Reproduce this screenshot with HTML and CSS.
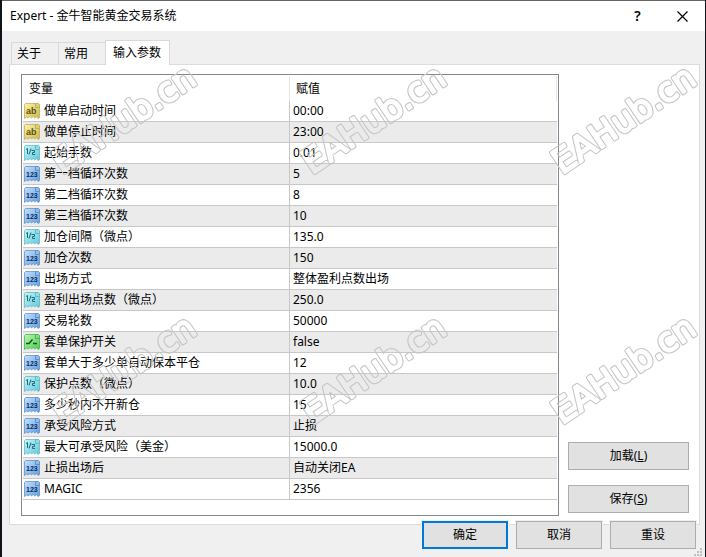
FILE: index.html
```html
<!DOCTYPE html>
<html lang="zh-CN">
<head>
    <meta charset="UTF-8">
    <meta name="viewport" content="width=device-width, initial-scale=1.0">
    <title>Expert - 金牛智能黄金交易系统</title>
    <link rel="stylesheet" href="styles.css">
</head>
<body>
    <!-- Shared drawings -->
    <svg class="defs" width="0" height="0" aria-hidden="true">
        <defs>
            <linearGradient id="g-yellow" x2="1" y2="1"><stop offset="0" stop-color="#fdf3ac"/><stop offset="1" stop-color="#cdb84a"/></linearGradient>
            <linearGradient id="g-cyan" x2="1" y2="1"><stop offset="0" stop-color="#c4f7f7"/><stop offset="1" stop-color="#62c6da"/></linearGradient>
            <linearGradient id="g-blue" x2="1" y2="1"><stop offset="0" stop-color="#c3e0ff"/><stop offset="1" stop-color="#5f9fdf"/></linearGradient>
            <linearGradient id="g-green" x2="1" y2="1"><stop offset="0" stop-color="#b9f7ac"/><stop offset="1" stop-color="#4fcb55"/></linearGradient>
            <path id="sheet" d="M1.500 .5H11.5L15.5 4.5V14.500L14 15.500L12.500 13.500L10.800 15L9.200 13.500L7.500 15L6 13.500L4 15L2.500 14L.5 15.500V1.500Z"/>
            <path id="fold" d="M11.5 .5H14.5L15.5 1.5V4.5H11.5Z"/>
            <symbol id="i-string" viewBox="0 0 16 16">
                <use href="#sheet" fill="url(#g-yellow)" stroke="#b9a64a" stroke-width=".7"/>
                <use href="#fold" fill="#e0cf70" stroke="#b9a64a" stroke-width=".8"/>
                <text class="glyph" x="2" y="11" font-size="9" fill="#5e5310">ab</text>
            </symbol>
            <symbol id="i-double" viewBox="0 0 16 16">
                <use href="#sheet" fill="url(#g-cyan)" stroke="#55b2c2" stroke-width=".7"/>
                <use href="#fold" fill="#8edde6" stroke="#55b2c2" stroke-width=".8"/>
                <path d="M2 4.500L3.500 3.500V9M7 3.500L5 9.500M7.500 5.500H10.500V7.500H8.500V9.500H11" fill="none" stroke="#1c6c7b"/>
            </symbol>
            <symbol id="i-int" viewBox="0 0 16 16">
                <use href="#sheet" fill="url(#g-blue)" stroke="#5487bd" stroke-width=".7"/>
                <use href="#fold" fill="#8fbdec" stroke="#5487bd" stroke-width=".8"/>
                <text class="glyph" x="2" y="11" font-size="7" fill="#0c2c58">123</text>
            </symbol>
            <symbol id="i-bool" viewBox="0 0 16 16">
                <use href="#sheet" fill="url(#g-green)" stroke="#3fa649" stroke-width=".7"/>
                <use href="#fold" fill="#82df80" stroke="#3fa649" stroke-width=".8"/>
                <path d="M2 9.500H5L8.500 5.500M9 9.500H13" fill="none" stroke="#0b5a17" stroke-width="1.500"/>
            </symbol>
            <mask id="hollow" maskUnits="userSpaceOnUse" x="-10" y="-50" width="220" height="80">
                <rect x="-10" y="-50" width="220" height="80" fill="#fff"/>
                <text class="mark-inner">EAHub.cn</text>
            </mask>
        </defs>
    </svg>

    <main class="window">
        <header class="titlebar">
            <h1>Expert - 金牛智能黄金交易系统</h1>
            <button class="caption help" type="button" aria-label="帮助">?</button>
            <button class="caption" type="button" aria-label="关闭">
                <svg width="11" height="11" viewBox="0 0 11 11"><path d="M.5 .5L10.500 10.500M10.500 .5L.5 10.500" stroke="#000" stroke-width="1.200"/></svg>
            </button>
        </header>

        <nav class="tabs">
            <button class="tab" type="button">关于</button>
            <button class="tab" type="button">常用</button>
            <button class="tab active" type="button">输入参数</button>
        </nav>

        <section class="panel">
            <div class="list">
                <table>
                    <thead>
                        <tr><th>变量</th><th>赋值</th></tr>
                    </thead>
                    <tbody>
                        <tr><td><svg class="icon"><use href="#i-string"/></svg>做单启动时间</td><td>00:00</td></tr>
                        <tr><td><svg class="icon"><use href="#i-string"/></svg>做单停止时间</td><td>23:00</td></tr>
                        <tr><td><svg class="icon"><use href="#i-double"/></svg>起始手数</td><td>0.01</td></tr>
                        <tr><td><svg class="icon"><use href="#i-int"/></svg>第一档循环次数</td><td>5</td></tr>
                        <tr><td><svg class="icon"><use href="#i-int"/></svg>第二档循环次数</td><td>8</td></tr>
                        <tr><td><svg class="icon"><use href="#i-int"/></svg>第三档循环次数</td><td>10</td></tr>
                        <tr><td><svg class="icon"><use href="#i-double"/></svg>加仓间隔（微点）</td><td>135.0</td></tr>
                        <tr><td><svg class="icon"><use href="#i-int"/></svg>加仓次数</td><td>150</td></tr>
                        <tr><td><svg class="icon"><use href="#i-int"/></svg>出场方式</td><td>整体盈利点数出场</td></tr>
                        <tr><td><svg class="icon"><use href="#i-double"/></svg>盈利出场点数（微点）</td><td>250.0</td></tr>
                        <tr><td><svg class="icon"><use href="#i-int"/></svg>交易轮数</td><td>50000</td></tr>
                        <tr><td><svg class="icon"><use href="#i-bool"/></svg>套单保护开关</td><td>false</td></tr>
                        <tr><td><svg class="icon"><use href="#i-int"/></svg>套单大于多少单自动保本平仓</td><td>12</td></tr>
                        <tr><td><svg class="icon"><use href="#i-double"/></svg>保护点数（微点）</td><td>10.0</td></tr>
                        <tr><td><svg class="icon"><use href="#i-int"/></svg>多少秒内不开新仓</td><td>15</td></tr>
                        <tr><td><svg class="icon"><use href="#i-int"/></svg>承受风险方式</td><td>止损</td></tr>
                        <tr><td><svg class="icon"><use href="#i-double"/></svg>最大可承受风险（美金）</td><td>15000.0</td></tr>
                        <tr><td><svg class="icon"><use href="#i-int"/></svg>止损出场后</td><td>自动关闭EA</td></tr>
                        <tr><td><svg class="icon"><use href="#i-int"/></svg>MAGIC</td><td>2356</td></tr>
                    </tbody>
                </table>
            </div>
            <div class="side">
                <button class="btn" type="button">加载(<u>L</u>)</button>
                <button class="btn" type="button">保存(<u>S</u>)</button>
            </div>
        </section>

        <footer class="actions">
            <button class="btn primary" type="button">确定</button>
            <button class="btn" type="button">取消</button>
            <button class="btn" type="button">重设</button>
        </footer>

        <svg class="grip" width="8" height="8" viewBox="0 0 8 8"><path d="M6 0h2v2h-2zM3 3h2v2h-2zM6 3h2v2h-2zM0 6h2v2h-2zM3 6h2v2h-2zM6 6h2v2h-2z" fill="#bfbfbf"/></svg>
    </main>

    <!-- Watermark, repeated every 250px -->
    <svg class="watermark" aria-hidden="true">
        <g transform="translate(62 175) rotate(-34)"><text class="mark" mask="url(#hollow)">EAHub.cn</text></g>
        <g transform="translate(312 175) rotate(-34)"><text class="mark" mask="url(#hollow)">EAHub.cn</text></g>
        <g transform="translate(562 175) rotate(-34)"><text class="mark" mask="url(#hollow)">EAHub.cn</text></g>
        <g transform="translate(62 425) rotate(-34)"><text class="mark" mask="url(#hollow)">EAHub.cn</text></g>
        <g transform="translate(312 425) rotate(-34)"><text class="mark" mask="url(#hollow)">EAHub.cn</text></g>
        <g transform="translate(562 425) rotate(-34)"><text class="mark" mask="url(#hollow)">EAHub.cn</text></g>
    </svg>
</body>
</html>
```
FILE: styles.css
```css
* {
    box-sizing: border-box;
}

body {
    margin: 0;
    padding: 0 1px 0 2px;
    min-height: 100vh;
    display: flex;
    background: #10141a;
    font-family: "Noto Sans", "Noto Sans CJK SC", sans-serif;
    font-size: 12px;
    line-height: 16px;
    color: #000;
}

button {
    font: inherit;
    color: inherit;
    padding: 0;
}

.defs {
    position: absolute;
}

.window {
    position: relative;
    flex: 1;
    display: flex;
    flex-direction: column;
    background: #f0f0f0;
    border-top: 1px solid #666;
}

.titlebar {
    display: flex;
    align-items: center;
    height: 30px;
    padding-left: 8px;
    background: #fff;
}

.titlebar h1 {
    flex: 1;
    margin: 0;
    font-size: 12px;
    font-weight: normal;
}

.caption {
    display: flex;
    align-items: center;
    justify-content: center;
    width: 45px;
    height: 30px;
    border: none;
    background: none;
}

.help {
    font-size: 14px;
    font-weight: 600;
}

.tabs {
    display: flex;
    align-items: flex-end;
    height: 33px;
    padding-left: 9px;
}

.tab {
    width: 48px;
    height: 22px;
    margin-right: -1px;
    padding-left: 5px;
    border: 1px solid #d9d9d9;
    border-bottom: none;
    background: #f0f0f0;
    text-align: left;
}

.tab.active {
    position: relative;
    width: 65px;
    height: 25px;
    margin-bottom: -1px;
    padding: 0 0 1px 7px;
    background: #fff;
}

.panel {
    flex: 1;
    display: flex;
    gap: 9px;
    margin: 0 5px 0 7px;
    padding: 9px 10px 8px 11px;
    background: #fff;
    border: 1px solid #dcdcdc;
}

.list {
    flex: 1;
    padding: 1px;
    border: 1px solid #828790;
}

table {
    width: 100%;
    table-layout: fixed;
    border-collapse: separate;
    border-spacing: 0;
}

th {
    height: 25px;
    padding: 0 0 0 6px;
    border-right: 1px solid #e5e5e5;
    font-weight: normal;
    text-align: left;
}

th:first-child {
    width: 50%;
}

td {
    height: 21px;
    padding: 0 0 0 3px;
    border-bottom: 1px solid #c8c8c8;
    white-space: nowrap;
}

td:first-child {
    padding-left: 1px;
    border-right: 1px solid #c8c8c8;
}

tbody tr:nth-child(even) {
    background: #ebebeb;
}

.icon {
    width: 16px;
    height: 16px;
    margin-right: 4px;
    vertical-align: middle;
}

.glyph {
    font-family: "Liberation Sans", sans-serif;
    font-weight: bold;
}

.side {
    display: flex;
    flex-direction: column;
    justify-content: flex-end;
    gap: 15px;
    width: 121px;
    padding-bottom: 3px;
}

.btn {
    height: 28px;
    border: 1px solid #adadad;
    background: #e1e1e1;
}

.btn.primary {
    border: 2px solid #0078d7;
}

.actions {
    position: relative;
    display: flex;
    justify-content: flex-end;
    gap: 8px;
    margin-top: -4px;
    padding: 0 9px 8px 0;
}

.actions .btn {
    width: 86px;
    outline: 1px solid #f0f0f0;
}

.grip {
    position: absolute;
    right: 3px;
    bottom: 1px;
}

.watermark {
    position: absolute;
    top: 0;
    left: 0;
    width: 100%;
    height: 100%;
    pointer-events: none;
}

.mark,
.mark-inner {
    font-family: "DejaVu Sans", sans-serif;
    font-size: 34px;
    stroke-linejoin: round;
}

.mark {
    fill: #c4c4c4;
    stroke: #c4c4c4;
    stroke-width: 4px;
}

.mark-inner {
    fill: #000;
    stroke: #000;
    stroke-width: 2px;
}
```
